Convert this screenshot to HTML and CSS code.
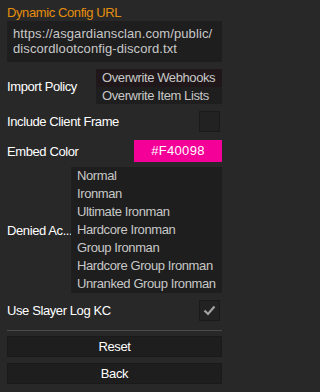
FILE: index.html
```html
<!DOCTYPE html>
<html>
<head>
<meta charset="utf-8">
<link rel="stylesheet" href="styles.css">
</head>
<body>
<div class="panel">
  <div class="title">Dynamic Config URL</div>
  <div class="urlbox">https://asgardiansclan.com/public/<br>discordlootconfig-discord.txt</div>

  <div class="row policy">
    <div class="label">Import Policy</div>
    <div class="list policy-list">
      <div class="item selected">Overwrite Webhooks</div>
      <div class="item">Overwrite Item Lists</div>
    </div>
  </div>

  <div class="row check-row frame-row">
    <div class="label">Include Client Frame</div>
    <div class="checkbox"></div>
  </div>

  <div class="row color-row">
    <div class="label">Embed Color</div>
    <div class="swatch">#F40098</div>
  </div>

  <div class="row denied">
    <div class="label denied-label">Denied Ac...</div>
    <div class="list denied-list">
      <div class="item">Normal</div>
      <div class="item">Ironman</div>
      <div class="item">Ultimate Ironman</div>
      <div class="item">Hardcore Ironman</div>
      <div class="item">Group Ironman</div>
      <div class="item">Hardcore Group Ironman</div>
      <div class="item">Unranked Group Ironman</div>
    </div>
  </div>

  <div class="row check-row slayer-row">
    <div class="label">Use Slayer Log KC</div>
    <div class="checkbox">
      <svg width="13" height="11" viewBox="0 0 13 11"><polyline points="1.5,5.5 5,9 11.5,1.5" fill="none" stroke="#a2a2a2" stroke-width="2.2"/></svg>
    </div>
  </div>

  <div class="separator"></div>
  <div class="button reset">Reset</div>
  <div class="button back">Back</div>
</div>
</body>
</html>
```

FILE: styles.css
```css
html, body {
  margin: 0;
  padding: 0;
  background: #282828;
}
body {
  width: 228px;
  height: 392px;
  overflow: hidden;
  font-family: "Liberation Sans", Arial, sans-serif;
  font-size: 13px;
  letter-spacing: -0.4px;
  color: #ffffff;
}
.panel {
  padding: 5px 6px 0 7px;
  display: flex;
  flex-direction: column;
}
.title {
  color: #e58e0e;
  line-height: 16px;
  height: 16px;
}
.urlbox {
  background: #1e1e1e;
  color: #c8c8c8;
  height: 41px;
  box-sizing: border-box;
  padding: 5px 0 0 6px;
  line-height: 15px;
  letter-spacing: 0.1px;
  white-space: nowrap;
}
.row {
  display: flex;
  align-items: center;
  justify-content: space-between;
}
.label {
  white-space: nowrap;
}
.list {
  background: #1e1e1e;
  color: #c8c8c8;
  display: flex;
  flex-direction: column;
}
.item {
  padding-left: 6px;
  white-space: nowrap;
}
.policy {
  margin-top: 7px;
}
.policy-list {
  width: 126px;
}
.policy-list .item {
  height: 17.5px;
  line-height: 17px;
}
.item.selected {
  background: #1f1719;
}
.check-row {
  height: 21px;
}
.frame-row {
  margin-top: 7px;
}
.slayer-row {
  margin-top: 7px;
}
.checkbox {
  width: 21px;
  height: 21px;
  box-sizing: border-box;
  margin-right: 2px;
  background: #222222;
  border: 1px solid #1a1a1a;
  display: flex;
  align-items: center;
  justify-content: center;
}
.color-row {
  margin-top: 8px;
  height: 22px;
}
.swatch {
  width: 88px;
  height: 22px;
  background: #f40098;
  color: #ffffff;
  text-align: center;
  line-height: 22px;
  letter-spacing: 0.3px;
}
.denied {
  margin-top: 5px;
}
.denied-label {
  width: 64px;
  overflow: hidden;
}
.denied-list {
  width: 151px;
}
.denied-list .item {
  height: 18px;
  line-height: 18px;
}
.separator {
  margin-top: 9px;
  height: 1px;
  background: #4b4b4b;
}
.button {
  height: 21px;
  box-sizing: border-box;
  background: #1e1e1e;
  border: 1px solid #1a1a1a;
  text-align: center;
  line-height: 19px;
  color: #ffffff;
}
.reset {
  margin-top: 5px;
}
.back {
  margin-top: 6px;
}
```
